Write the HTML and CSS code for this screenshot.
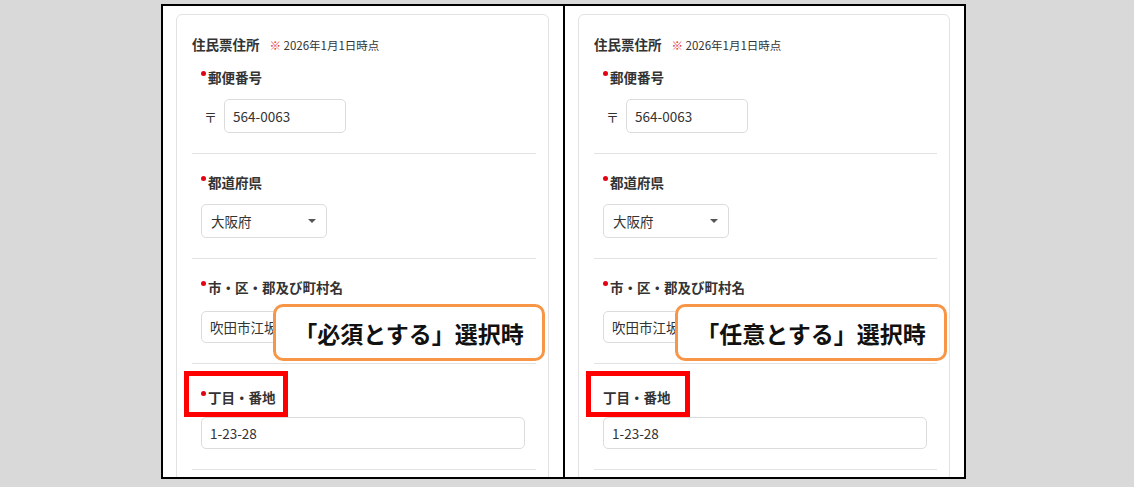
FILE: index.html
```html
<!DOCTYPE html>
<html lang="ja">
<head>
  <meta charset="UTF-8">
  <meta name="viewport" content="width=device-width, initial-scale=1.0">
  <title>住民票住所 - 必須/任意の比較</title>
  <link rel="stylesheet" href="styles.css">
</head>
<body>
  <div class="sheet">
    <div class="panel">
      <div class="card">
        <div class="card-title">住民票住所<span class="note"><span class="note-mark">※</span> 2026年1月1日時点</span></div>

        <div class="field field-first">
          <div class="label required">郵便番号</div>
          <div class="postal">
            <span class="postal-mark">〒</span>
            <input class="input input-postal" type="text" value="564-0063" readonly>
          </div>
        </div>

        <div class="field">
          <div class="label required">都道府県</div>
          <div class="select">
            <span>大阪府</span>
            <svg class="caret" width="8" height="4" viewBox="0 0 8 4"><path d="M0 0h8L4 4z" fill="#555"/></svg>
          </div>
        </div>

        <div class="field">
          <div class="label label-wide required">市・区・郡及び町村名</div>
          <input class="input" type="text" value="吹田市江坂町" readonly>
          <div class="callout">「必須とする」選択時</div>
        </div>

        <div class="field field-street">
          <div class="label required">丁目・番地</div>
          <input class="input" type="text" value="1-23-28" readonly>
          <div class="highlight"></div>
        </div>

        <div class="field field-last"></div>
      </div>
    </div>

    <div class="panel">
      <div class="card">
        <div class="card-title">住民票住所<span class="note"><span class="note-mark">※</span> 2026年1月1日時点</span></div>

        <div class="field field-first">
          <div class="label required">郵便番号</div>
          <div class="postal">
            <span class="postal-mark">〒</span>
            <input class="input input-postal" type="text" value="564-0063" readonly>
          </div>
        </div>

        <div class="field">
          <div class="label required">都道府県</div>
          <div class="select">
            <span>大阪府</span>
            <svg class="caret" width="8" height="4" viewBox="0 0 8 4"><path d="M0 0h8L4 4z" fill="#555"/></svg>
          </div>
        </div>

        <div class="field">
          <div class="label label-wide required">市・区・郡及び町村名</div>
          <input class="input" type="text" value="吹田市江坂町" readonly>
          <div class="callout">「任意とする」選択時</div>
        </div>

        <div class="field field-street">
          <div class="label">丁目・番地</div>
          <input class="input" type="text" value="1-23-28" readonly>
          <div class="highlight"></div>
        </div>

        <div class="field field-last"></div>
      </div>
    </div>
  </div>
</body>
</html>
```

FILE: styles.css
```css
body {
  margin: 0;
  background-color: #d9d9d9;
  font-family: "Noto Sans CJK JP", "Noto Sans", sans-serif;
  color: #333;
}
.sheet {
  display: flex;
  width: 805px;
  height: 475px;
  margin: 4px 0 0 161px;
  border: 2px solid #000;
  box-sizing: border-box;
  background-color: #fff;
}
.panel {
  position: relative;
  flex: 0 0 400px;
  box-sizing: border-box;
  padding: 8px 14px 0 13px;
  overflow: hidden;
}
.panel + .panel {
  flex: 0 0 401px;
  border-left: 2px solid #000;
}
.card {
  border: 1px solid #e2e2e2;
  border-radius: 6px;
  padding: 19px 12px 60px 15px;
}
.card-title {
  font-size: 13.5px;
  font-weight: 700;
  line-height: 20px;
  margin-bottom: 12px;
}
.note {
  font-size: 11.5px;
  font-weight: 400;
  margin-left: 10px;
}
.note-mark {
  color: #e8383d;
}
.field {
  position: relative;
  padding: 18px 0 20px 9px;
  border-top: 1px solid #e2e2e2;
}
.field-first {
  padding-top: 0;
  border-top: 0;
}
.field-street {
  padding-top: 23px;
}
.field-last {
  padding: 0;
  height: 40px;
}
.label {
  font-size: 13.5px;
  font-weight: 700;
  line-height: 20px;
  margin-bottom: 12px;
}
.label-wide {
  margin-bottom: 14px;
}
.field-street .label {
  margin-bottom: 10px;
}
.label.required::before {
  content: "";
  display: inline-block;
  width: 5px;
  height: 5px;
  margin-right: 2px;
  border-radius: 50%;
  background-color: #e60012;
  vertical-align: middle;
  position: relative;
  top: -6px;
}
.postal {
  display: flex;
  align-items: center;
}
.postal-mark {
  font-size: 13px;
  margin: 0 7px 0 3px;
}
.input {
  display: block;
  box-sizing: border-box;
  width: 324px;
  height: 32px;
  padding: 0 8px;
  border: 1px solid #dcdcdc;
  border-radius: 5px;
  font-family: inherit;
  font-size: 13.5px;
  color: #333;
  background: #fff;
  outline: none;
}
.input-postal {
  width: 122px;
  height: 34px;
}
.select {
  display: flex;
  align-items: center;
  justify-content: space-between;
  box-sizing: border-box;
  width: 126px;
  height: 34px;
  padding: 0 10px 0 9px;
  border: 1px solid #dcdcdc;
  border-radius: 5px;
  font-size: 13.5px;
}
.callout {
  position: absolute;
  left: 81px;
  top: 45px;
  width: 272px;
  height: 57px;
  box-sizing: border-box;
  display: flex;
  align-items: center;
  justify-content: center;
  border: 3px solid #f79646;
  border-radius: 10px;
  background-color: #fff;
  font-size: 23px;
  font-weight: 700;
  color: #111;
}
.highlight {
  position: absolute;
  left: -8px;
  top: 7px;
  width: 104px;
  height: 46px;
  box-sizing: border-box;
  border: 5px solid #ff0000;
}
```
